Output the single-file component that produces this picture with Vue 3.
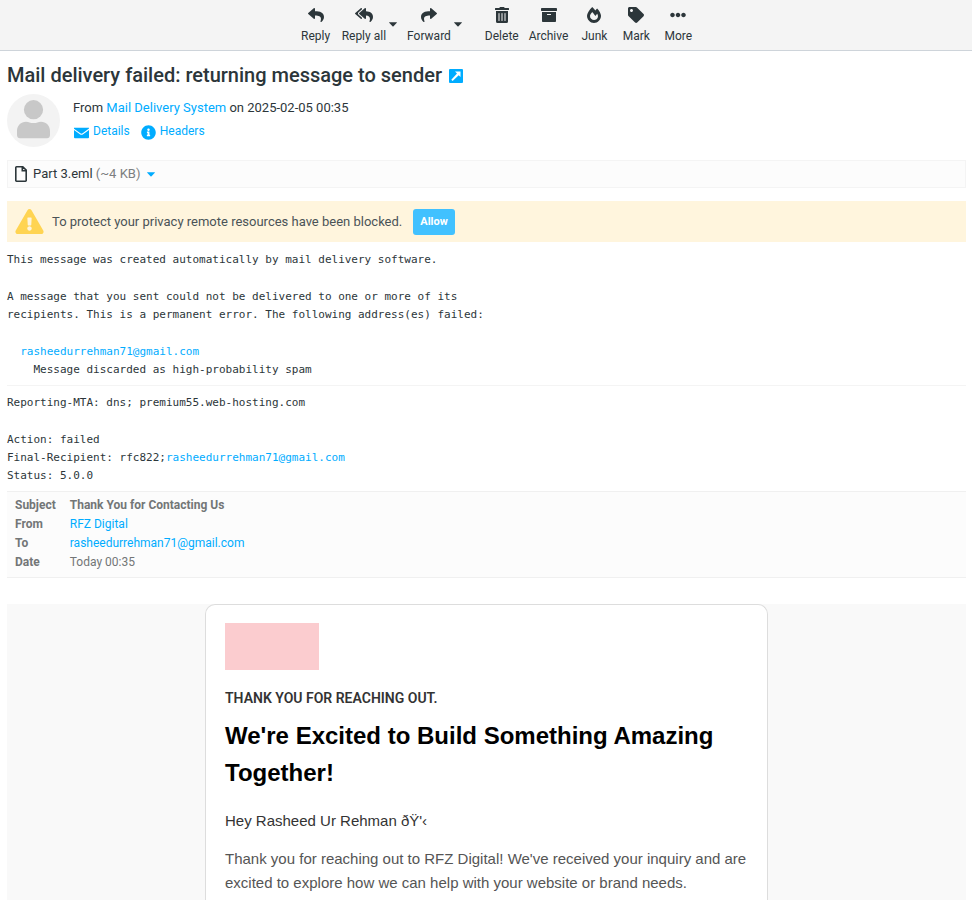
<script setup>
const paths = {
  reply: 'M8.309 189.836L184.313 37.851C199.719 24.546 224 35.347 224 56.015v80.053c160.629 1.839 288 34.032 288 186.258 0 61.441-39.581 122.309-83.333 154.132-13.653 9.931-33.111-2.533-28.077-18.631 45.344-145.012-21.507-183.51-176.59-185.742V360c0 20.7-24.3 31.453-39.687 18.164l-176.004-152c-11.071-9.562-11.086-26.753 0-36.328z',
  replyAll: 'M136.309 189.836L312.313 37.851C327.72 24.546 352 35.348 352 56.015v82.763c129.182 10.231 224 52.212 224 183.548 0 61.441-39.582 122.309-83.333 154.132-13.653 9.931-33.111-2.533-28.077-18.631 38.512-123.162-3.922-169.482-112.59-182.015v84.175c0 20.701-24.3 31.453-39.687 18.164L136.309 226.164c-11.071-9.561-11.086-26.753 0-36.328zm-128 36.328L184.313 378.15C199.7 391.439 224 380.687 224 359.986v-15.818l-108.606-93.785A55.96 55.96 0 0 1 96 207.998a55.953 55.953 0 0 1 19.393-42.38L224 71.832V56.015c0-20.667-24.28-31.469-39.687-18.164L8.309 189.836c-11.086 9.575-11.071 26.767 0 36.328z',
  trash: 'M32 464a48 48 0 0 0 48 48h288a48 48 0 0 0 48-48V128H32zm272-256a16 16 0 0 1 32 0v224a16 16 0 0 1-32 0zm-96 0a16 16 0 0 1 32 0v224a16 16 0 0 1-32 0zm-96 0a16 16 0 0 1 32 0v224a16 16 0 0 1-32 0zM432 32H312l-9.4-18.7A24 24 0 0 0 281.1 0H166.8a23.72 23.72 0 0 0-21.4 13.3L136 32H16A16 16 0 0 0 0 48v32a16 16 0 0 0 16 16h416a16 16 0 0 0 16-16V48a16 16 0 0 0-16-16z',
  archive: 'M32 448c0 17.7 14.3 32 32 32h384c17.7 0 32-14.3 32-32V160H32v288zm160-212c0-6.6 5.4-12 12-12h104c6.6 0 12 5.4 12 12v8c0 6.6-5.4 12-12 12H204c-6.6 0-12-5.4-12-12v-8zM480 32H32C14.3 32 0 46.3 0 64v48c0 8.8 7.2 16 16 16h480c8.8 0 16-7.2 16-16V64c0-17.7-14.3-32-32-32z',
  fire: 'M323.56 51.2c-20.8 19.3-39.58 39.59-56.22 59.97C240.08 73.62 206.28 35.53 168 0 69.74 91.17 0 209.96 0 281.6 0 408.85 100.29 512 224 512s224-103.15 224-230.4c0-53.27-51.98-163.14-124.44-230.4zm-19.47 340.65C282.43 407.01 255.72 416 226.86 416 154.71 416 96 368.26 96 290.75c0-38.61 24.31-72.63 72.79-130.75 6.93 7.98 98.83 125.34 98.83 125.34l58.63-66.88c4.14 6.85 7.91 13.55 11.27 19.97 27.35 52.19 15.81 118.97-33.43 153.42z',
  tag: 'M0 252.118V48C0 21.49 21.49 0 48 0h204.118a48 48 0 0 1 33.941 14.059l211.882 211.882c18.745 18.745 18.745 49.137 0 67.882L293.823 497.941c-18.745 18.745-49.137 18.745-67.882 0L14.059 286.059A48 48 0 0 1 0 252.118zM112 64c-26.51 0-48 21.49-48 48s21.49 48 48 48 48-21.49 48-48-21.49-48-48-48z',
  dots: 'M328 256c0 39.8-32.2 72-72 72s-72-32.2-72-72 32.2-72 72-72 72 32.2 72 72zm104-72c-39.8 0-72 32.2-72 72s32.2 72 72 72 72-32.2 72-72-32.2-72-72-72zm-352 0c-39.8 0-72 32.2-72 72s32.2 72 72 72 72-32.2 72-72-32.2-72-72-72z',
}

const actions = [
  { label: 'Reply', box: '0 0 512 512', path: paths.reply },
  { label: 'Reply all', box: '0 0 576 512', path: paths.replyAll, menu: true },
  { label: 'Forward', box: '0 0 512 512', path: paths.reply, flip: true, menu: true, last: true },
  { label: 'Delete', box: '0 0 448 512', path: paths.trash },
  { label: 'Archive', box: '0 0 512 512', path: paths.archive },
  { label: 'Junk', box: '0 0 448 512', path: paths.fire },
  { label: 'Mark', box: '0 0 512 512', path: paths.tag },
  { label: 'More', box: '0 0 512 512', path: paths.dots },
]

const address = 'rasheedurrehman71@gmail.com'

// Each text part is a list of paragraphs; each paragraph is a list of lines.
const bounce = [
  [{ text: 'This message was created automatically by mail delivery software.' }],
  [
    { text: 'A message that you sent could not be delivered to one or more of its' },
    { text: 'recipients. This is a permanent error. The following address(es) failed:' },
  ],
  [{ text: '  ', link: address }, { text: '    Message discarded as high-probability spam' }],
]
const report = [
  [{ text: 'Reporting-MTA: dns; premium55.web-hosting.com' }],
  [{ text: 'Action: failed' }, { text: 'Final-Recipient: rfc822;', link: address }, { text: 'Status: 5.0.0' }],
]
const textParts = [bounce, report]
</script>

<template>
  <div class="page">
    <nav class="toolbar" aria-label="Message actions">
      <div v-for="a in actions" :key="a.label" class="action" :class="{ 'ends-group': a.last }">
        <button type="button" class="tool">
          <svg class="tool-icon" :class="{ flip: a.flip }" :viewBox="a.box" aria-hidden="true"><path :d="a.path" /></svg>
          <span>{{ a.label }}</span>
        </button>
        <button v-if="a.menu" type="button" class="tool-menu" :aria-label="a.label + ' options'">
          <svg class="caret" viewBox="0 0 8 5" aria-hidden="true"><path d="M.4.200h7.200q.5 0 .2.500L4.500 4.200q-.5.4-1 0L.2.700Q-.1.200.4.200z" /></svg>
        </button>
      </div>
    </nav>

    <main class="message">
      <h1 class="subject">
        <span>Mail delivery failed: returning message to sender</span>
        <a href="#" class="open-link" aria-label="Open in new window">
          <svg viewBox="0 0 14 14" aria-hidden="true">
            <rect width="14" height="14" rx="1" fill="#00acff" />
            <path d="M6 2.500h5.500V8L9.700 6.200 3.600 12 2.300 10.700 8 4.500z" fill="#fff" />
          </svg>
        </a>
      </h1>

      <header class="sender">
        <svg class="avatar" viewBox="0 0 53 53" aria-hidden="true">
          <circle cx="26.5" cy="26.5" r="26.5" fill="#f3f3f3" />
          <circle cx="26.5" cy="15.7" r="9.6" fill="#c8c8c8" />
          <path d="M10 41v-4c0-5.5 4-9.3 9-9.3 3 0 4 1.400 7.500 1.400s4.500-1.400 7.500-1.400c5 0 9 3.800 9 9.300v4c0 2-1.200 3.300-3 3.300H13c-1.800 0-3-1.300-3-3.300z" fill="#c8c8c8" />
        </svg>
        <div>
          <p class="from">From <a href="#">Mail Delivery System</a> on 2025-02-05 00:35</p>
          <p class="header-links">
            <a href="#">
              <svg class="mini" viewBox="0 0 16 16" aria-hidden="true">
                <path d="M0 3h16v.8L9.200 8.800q-1.200.8-2.400 0L0 3.900zM0 5.300l6.300 4.500q1.700 1.100 3.400 0L16 5.300V13a1 1 0 0 1-1 1H1a1 1 0 0 1-1-1z" />
              </svg>
              <span>Details</span>
            </a>
            <a href="#">
              <svg class="mini" viewBox="0 0 512 512" aria-hidden="true">
                <path d="M256 8C119.043 8 8 119.083 8 256c0 136.997 111.043 248 248 248s248-111.003 248-248C504 119.083 392.957 8 256 8zm0 110c23.196 0 42 18.804 42 42s-18.804 42-42 42-42-18.804-42-42 18.804-42 42-42zm56 254c0 6.627-5.373 12-12 12h-88c-6.627 0-12-5.373-12-12v-24c0-6.627 5.373-12 12-12h12v-64h-12c-6.627 0-12-5.373-12-12v-24c0-6.627 5.373-12 12-12h64c6.627 0 12 5.373 12 12v100h12c6.627 0 12 5.373 12 12v24z" />
              </svg>
              <span>Headers</span>
            </a>
          </p>
        </div>
      </header>

      <div class="attachments">
        <a href="#" class="attachment">
          <svg class="file" viewBox="0 0 12 16" aria-hidden="true">
            <path d="M1.500.8h6.300l3.400 3.400v10.300a.7.7 0 0 1-.7.7h-9a.7.7 0 0 1-.7-.7v-13a.7.7 0 0 1 .7-.7zM7.300 1v3.700H11" fill="none" stroke="#2c363a" stroke-width="1.600" />
          </svg>
          <span>Part 3.eml <span class="size">(~4 KB)</span></span>
        </a>
        <button type="button" class="attachment-menu" aria-label="Attachment options">
          <svg class="caret" viewBox="0 0 8 5" aria-hidden="true"><path d="M.4.200h7.200q.5 0 .2.500L4.500 4.200q-.5.4-1 0L.2.700Q-.1.200.4.200z" /></svg>
        </button>
      </div>

      <div class="notice" role="alert">
        <svg class="warning" viewBox="0 0 576 512" aria-hidden="true">
          <path d="M569.517 440.013C587.975 472.007 564.806 512 527.94 512H48.054c-36.937 0-59.999-40.055-41.577-71.987L246.423 23.985c18.467-32.009 64.72-31.951 83.154 0l239.94 416.028zM288 354c-25.405 0-46 20.595-46 46s20.595 46 46 46 46-20.595 46-46-20.595-46-46-46zm-43.673-165.346l7.418 136c.347 6.364 5.609 11.346 11.982 11.346h48.546c6.373 0 11.635-4.982 11.982-11.346l7.418-136c.375-6.874-5.098-12.654-11.982-12.654h-63.383c-6.884 0-12.356 5.78-11.981 12.654z" />
        </svg>
        <span>To protect your privacy remote resources have been blocked.</span>
        <button type="button" class="allow">Allow</button>
      </div>

      <div v-for="(part, i) in textParts" :key="i" class="plain">
        <div v-for="(paragraph, j) in part" :key="j">
          <div v-for="(line, k) in paragraph" :key="k" class="line">
            <span>{{ line.text }}</span><a v-if="line.link" :href="'mailto:' + line.link">{{ line.link }}</a>
          </div>
        </div>
      </div>

      <div class="part-headers">
        <table>
          <tbody>
            <tr><th scope="row">Subject</th><td><strong>Thank You for Contacting Us</strong></td></tr>
            <tr><th scope="row">From</th><td><a href="#">RFZ Digital</a></td></tr>
            <tr><th scope="row">To</th><td><a href="#">{{ address }}</a></td></tr>
            <tr><th scope="row">Date</th><td>Today 00:35</td></tr>
          </tbody>
        </table>
      </div>

      <section class="mail-body">
        <article class="card">
          <div class="blocked-image"></div>
          <p class="eyebrow">THANK YOU FOR REACHING OUT.</p>
          <h2>We're Excited to Build Something Amazing Together!</h2>
          <p class="greeting">Hey Rasheed Ur Rehman ðŸ'‹</p>
          <p class="copy">Thank you for reaching out to RFZ Digital! We've received your inquiry and are excited to explore how we can help with your website or brand needs.</p>
        </article>
      </section>
    </main>
  </div>
</template>

<style>
body {
  margin: 0;
  background: #fff;
}
</style>

<style scoped>
.page {
  display: flex;
  flex-direction: column;
  min-height: 100vh;
  font-family: Roboto, "Liberation Sans", sans-serif;
  font-size: 13px;
  line-height: 20px;
  color: #2c363a;
}
p, h1, h2 {
  margin: 0;
}
a {
  color: #00acff;
  text-decoration: none;
}
button {
  font: inherit;
  color: inherit;
  border: 0;
  background: none;
  padding: 0;
  cursor: pointer;
}
svg {
  display: block;
  flex: none;
  fill: currentColor;
}

.toolbar {
  display: flex;
  justify-content: center;
  height: 50px;
  padding-left: 22px;
  background: #f4f4f4;
  border-bottom: 1px solid #ced4da;
}
.action {
  display: flex;
}
.ends-group {
  margin-right: 13px;
}
.tool {
  display: flex;
  flex-direction: column;
  align-items: center;
  gap: 5px;
  min-width: 42px;
  padding: 7px 5px 0;
  font-size: 12px;
  line-height: 16px;
}
.tool-icon {
  height: 16px;
}
.flip {
  transform: scaleX(-1);
}
.tool-menu {
  width: 12px;
  margin: 0 3px 0 -4px;
  padding-bottom: 2px;
}
.caret {
  width: 8px;
  height: 5px;
  margin: 0 auto;
}

.message {
  flex: 1;
  display: flex;
  flex-direction: column;
  padding: 10px 6px 0 7px;
}
.subject {
  display: flex;
  align-items: center;
  gap: 7px;
  font-size: 20px;
  line-height: 28px;
  font-weight: 500;
}
.open-link svg {
  width: 14px;
  height: 14px;
  margin-top: 2px;
}
.sender {
  display: flex;
  gap: 13px;
  margin-top: 5px;
}
.avatar {
  width: 53px;
  height: 53px;
}
.from {
  margin-top: 4px;
}
.header-links {
  display: flex;
  gap: 11px;
  margin-top: 3px;
  padding-left: 1px;
  font-size: 12px;
}
.header-links a {
  display: flex;
  align-items: center;
  gap: 4px;
}
.mini {
  width: 15px;
  height: 15px;
  margin-top: 3px;
}

.attachments {
  display: flex;
  align-items: center;
  gap: 7px;
  height: 26px;
  margin-top: 13px;
  padding: 0 7px;
  background: #fcfcfc;
  border: 1px solid #f4f4f4;
}
.attachment {
  display: flex;
  align-items: center;
  gap: 6px;
  color: inherit;
}
.file {
  width: 12px;
  height: 16px;
}
.size {
  color: #7c7f80;
}
.attachment-menu {
  color: #00acff;
}

.notice {
  display: flex;
  align-items: center;
  height: 41px;
  margin-top: 13px;
  margin-bottom: 1px;
  padding: 0 8px;
  background: #fff5dd;
  color: #4a5357;
}
.warning {
  width: 29px;
  height: 25px;
  margin-right: 8px;
  color: #ffd452;
}
.allow {
  height: 26px;
  margin-left: 11px;
  padding: 0 7px;
  border-radius: 3px;
  background: #41c1ff;
  color: #fff;
  font-size: 11px;
  font-weight: 700;
}

.plain {
  display: flex;
  flex-direction: column;
  gap: 19px;
  padding: 8px 0 6px;
  font-family: "DejaVu Sans Mono", monospace;
  font-size: 11px;
  line-height: 18px;
}
.plain + .plain {
  border-top: 1px solid #f4f4f4;
}
.line {
  display: flex;
  flex-wrap: wrap;
}
.line span {
  white-space: pre-wrap;
}

.part-headers {
  padding: 4px 4px 5px;
  background: #fcfcfc;
  border-top: 1px solid #f0f0f0;
  border-bottom: 1px solid #f0f0f0;
  color: #737677;
}
table {
  border-collapse: collapse;
  font-size: 12px;
  line-height: 19px;
}
th, td {
  padding: 0 10px 0 4px;
  text-align: left;
  font-weight: 400;
}
th, strong {
  font-weight: 700;
}

.mail-body {
  flex: 1;
  display: flex;
  justify-content: center;
  margin-top: 26px;
  background: #f9f9f9;
  font-family: "Liberation Sans", Arial, sans-serif;
}
.card {
  box-sizing: border-box;
  width: 100%;
  max-width: 563px;
  padding: 18px 19px 5px;
  background: #fff;
  border: 1px solid #ddd;
  border-bottom: 0;
  border-radius: 10px 10px 0 0;
}
.blocked-image {
  width: 94px;
  height: 47px;
  background: #fbcccf;
}
.eyebrow {
  margin-top: 18px;
  font-family: Roboto, sans-serif;
  font-size: 14px;
  font-weight: 600;
  color: #333;
}
h2 {
  margin-top: 9px;
  font-size: 24px;
  line-height: 37px;
  color: #000;
}
.greeting {
  margin-top: 18px;
  font-size: 15px;
  line-height: 24px;
  color: #333;
}
.copy {
  margin-top: 14px;
  font-size: 15px;
  line-height: 24px;
  color: #555;
}
</style>
